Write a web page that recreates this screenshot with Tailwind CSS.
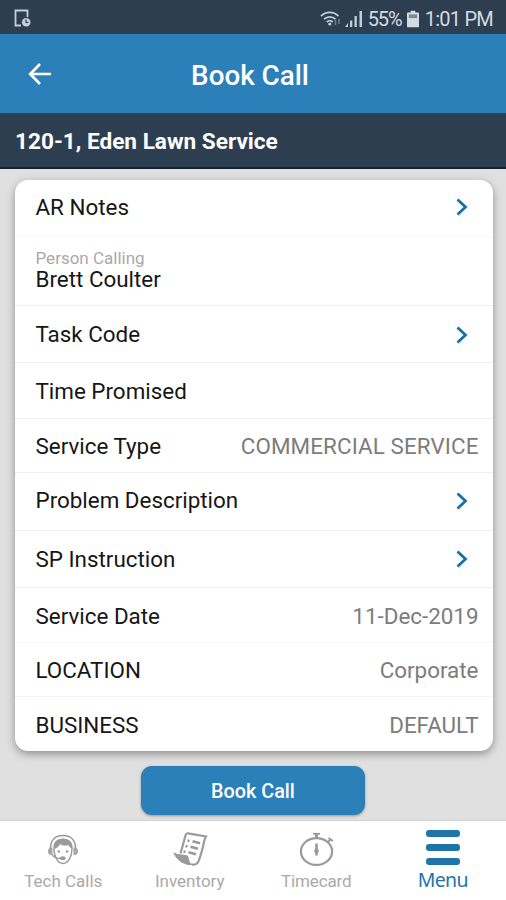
<!DOCTYPE html>
<html lang="en">
  <head>
    <meta charset="UTF-8" />
    <title>Book Call</title>
    <meta name="viewport" content="width=device-width, initial-scale=1.0" />
    <script src="https://cdn.jsdelivr.net/npm/@tailwindcss/browser@4"></script>
    <style>
      body {
        font-family: Roboto, 'Liberation Sans', sans-serif;
      }
    </style>
  </head>
  <body class="bg-[#e0e0e0]">
    <div class="w-[506px] h-[900px] flex flex-col overflow-hidden">

      <!-- Status bar -->
      <div class="h-[34px] shrink-0 bg-[#2d3e50] flex items-center justify-between pl-[14px] pr-[13px] pt-[3px] text-[#d3dbe3]">
        <svg class="w-[18px] h-[19px]" viewBox="0 0 18 19" fill="none" stroke="#c3ced8" stroke-width="1.8">
          <path d="M7 16.5H1.5V1.5h12V8" />
          <circle cx="12.2" cy="13.2" r="4.3" fill="#c3ced8" stroke="none" />
          <path d="M12 10.5v3h2.5" stroke="#2d3e50" stroke-width="1.2" />
        </svg>
        <div class="flex items-center">
          <svg class="w-[22px] h-[18px] mr-[3px]" viewBox="0 0 22 18" fill="none" stroke="#c3ced8" stroke-width="1.8">
            <path d="M1 6.2C6 1.2 13.5 1.2 18.5 6.2" />
            <path d="M4 9.2c3.3-3.2 8.200-3.200 11.500 0" />
            <path d="M6.800 12c1.800-1.600 4.200-1.600 6 0" />
            <circle cx="9.800" cy="14" r="1.600" fill="#c3ced8" stroke="none" />
            <path d="M15.500 10v5M19 9v5" stroke="#6b7b8b" stroke-width="1.600" />
          </svg>
          <svg class="w-[18px] h-[18px] mr-[5px]" viewBox="0 0 18 18" fill="#c3ced8">
            <path d="M0 17l3-4v4zM5 10.500h2.300V17H5zM9.500 6h2.300v11H9.500zM14.500 1H17v16h-2.500z" />
          </svg>
          <span class="text-[20px] leading-none w-[34px] mr-[5px] whitespace-nowrap tracking-[-1.1px]">55%</span>
          <svg class="w-[12px] h-[18px] mr-[6px]" viewBox="0 0 13 18">
            <path d="M4 0h5v2h3a1 1 0 0 1 1 1v14a1 1 0 0 1-1 1H1a1 1 0 0 1-1-1V3a1 1 0 0 1 1-1h3z" fill="#d3dbe3" />
            <path d="M2 4h9v4H2z" fill="#7d8794" />
          </svg>
          <span class="text-[20px] leading-none whitespace-nowrap tracking-[-0.75px]">1:01 PM</span>
        </div>
      </div>

      <!-- Title bar -->
      <header class="h-[79px] shrink-0 bg-[#2c80ba] grid grid-cols-[100px_1fr_106px] items-center">
        <svg class="w-[23px] h-[22px] ml-[28px]" viewBox="0 0 23 22" fill="none" stroke="#fff" stroke-width="2.7">
          <path d="M12 1L2.200 11 12 21M2.200 11H23" />
        </svg>
        <h1 class="text-center text-[27.800px] leading-none font-medium text-white pt-[4px]">Book Call</h1>
      </header>

      <!-- Customer -->
      <div class="h-[56px] shrink-0 bg-[#2d3e50] border-t border-[#1c4a6e] border-b-2 border-b-[#14212e] flex items-center pl-[15px] pt-[3px]">
        <h2 class="text-[22.600px] leading-none font-bold text-white">120-1, Eden Lawn Service</h2>
      </div>

      <main class="h-[652px] shrink-0 border-b border-[#d2d2d2] flex flex-col items-center pt-[11px]">
        <div class="w-[478px] h-[571px] shrink-0 ml-px rounded-[13px] bg-white shadow-[0_3px_8px_rgba(0,0,0,0.36)] text-[22.400px] leading-none text-[#161616] overflow-hidden">
          <div class="h-[57px] border-b border-[#f7f7f7] flex items-center justify-between pl-[21px] pr-[25px] pb-[2px]">
            <span>AR Notes</span>
            <svg class="w-[12px] h-[18px]" viewBox="0 0 12 18" fill="none" stroke="#1870a8" stroke-width="2.800"><path d="M1.500 1.500L9.500 9l-8 7.500" /></svg>
          </div>
          <div class="h-[69px] border-b border-[#efefef] flex flex-col justify-center pl-[21px] pb-[3px]">
            <span class="text-[17px] leading-[20px] text-[#a9a9a9]">Person Calling</span>
            <span class="leading-[23px]">Brett Coulter</span>
          </div>
          <div class="h-[57px] border-b border-[#efefef] flex items-center justify-between pl-[21px] pr-[25px] pt-[1px]">
            <span>Task Code</span>
            <svg class="w-[12px] h-[18px]" viewBox="0 0 12 18" fill="none" stroke="#1870a8" stroke-width="2.800"><path d="M1.500 1.500L9.500 9l-8 7.500" /></svg>
          </div>
          <div class="h-[56px] border-b border-[#efefef] flex items-center pl-[21px] pt-[2px]">
            <span>Time Promised</span>
          </div>
          <div class="h-[54px] border-b border-[#efefef] flex items-center justify-between pl-[21px] pr-[14px] pt-[2px]">
            <span>Service Type</span>
            <span class="text-[#7c7c7c] tracking-[0.1px]">COMMERCIAL SERVICE</span>
          </div>
          <div class="h-[58px] border-b border-[#efefef] flex items-center justify-between pl-[21px] pr-[25px] pb-[2px]">
            <span>Problem Description</span>
            <svg class="w-[12px] h-[18px]" viewBox="0 0 12 18" fill="none" stroke="#1870a8" stroke-width="2.800"><path d="M1.500 1.500L9.500 9l-8 7.500" /></svg>
          </div>
          <div class="h-[57px] border-b border-[#efefef] flex items-center justify-between pl-[21px] pr-[25px]">
            <span>SP Instruction</span>
            <svg class="w-[12px] h-[18px]" viewBox="0 0 12 18" fill="none" stroke="#1870a8" stroke-width="2.800"><path d="M1.500 1.500L9.500 9l-8 7.500" /></svg>
          </div>
          <div class="h-[55px] border-b border-[#f7f7f7] flex items-center justify-between pl-[21px] pr-[14px] pt-[2px]">
            <span>Service Date</span>
            <span class="text-[#7c7c7c]">11-Dec-2019</span>
          </div>
          <div class="h-[54px] border-b border-[#f3f3f3] flex items-center justify-between pl-[21px] pr-[14px] pt-[2px]">
            <span>LOCATION</span>
            <span class="text-[#7c7c7c]">Corporate</span>
          </div>
          <div class="h-[54px] flex items-center justify-between pl-[21px] pr-[14px] pt-[2px]">
            <span>BUSINESS</span>
            <span class="text-[#7c7c7c]">DEFAULT</span>
          </div>
        </div>

        <button class="mt-[15px] w-[224px] h-[49px] shrink-0 rounded-[11px] bg-[#2c80ba] shadow-[0_1px_3px_rgba(0,0,0,0.35)] text-white text-[19.800px] leading-none font-medium pt-[2px]">Book Call</button>
      </main>

      <!-- Tabs -->
      <nav class="grow bg-white grid grid-cols-4 text-[17px] leading-none text-[#a9a9a9]">
        <div class="flex flex-col items-center pt-[13px]">
          <svg class="w-[32px] h-[32px]" viewBox="0 0 32 32" fill="none" stroke="#9a9a9a">
            <path d="M3.500 14C3.500 5.500 9 1.500 16 1.500S28.500 5.500 28.500 14" stroke-width="1.500" />
            <path d="M6.500 15.500C5.500 8 10 4.500 16 4.500s10.500 3.500 9.500 11c-2-1.500-3.500-3-4.500-4.500-3 1.500-6 .5-8-1-1 2.500-3 4-6.500 5.500z" fill="#9a9a9a" stroke="none" />
            <path d="M7 14.500c0 8.500 4 15 9 15s9-6.500 9-15" stroke-width="1.400" />
            <path d="M5.500 13.500C2.500 13 1 14.500 1 17.200s1.500 4.300 4.500 3.800zM26.500 13.500c3-.5 4.500 1 4.500 3.700s-1.500 4.300-4.500 3.800z" fill="#a6a6a6" stroke="none" />
            <path d="M5 20.500c2 3.500 5 4 8.500 4" stroke-width="1.400" />
            <circle cx="11.800" cy="17.500" r="1.300" fill="#9a9a9a" stroke="none" />
            <circle cx="20.200" cy="17.500" r="1.300" fill="#9a9a9a" stroke="none" />
            <path d="M12.500 24.500c1-3 5.500-3 6.500 0-1.500 2-5 2-6.500 0z" fill="#9a9a9a" stroke="none" />
          </svg>
          <span class="mt-[7px]">Tech Calls</span>
        </div>
        <div class="flex flex-col items-center pt-[10px]">
          <svg class="w-[36px] h-[36px]" viewBox="0 0 36 36" fill="none" stroke="#9a9a9a" stroke-width="2.200">
            <path d="M8.500 22.500L13.500 4.500c.5-1.800 1-2.500 2.500-2.200L34 5.500c-2 3-2 5-3 10.500-1.500 5-2.500 9-4 13-1 3-3.500 5.300-7 4.500" />
            <path d="M2 22c4 2.500 9 1.500 13.500 3 1.500 3 .5 6 4.500 8.500-6.500.8-15-3.500-18-11.500z" fill="#9a9a9a" stroke-width="1" />
            <path d="M15.500 9.500l2 .5M20.500 10.200l7.500 2M13.500 15l2 .5M18.500 15.700l7.500 2M11.500 20.500l2 .5M16.500 21.200l7.500 2" stroke-width="2.600" />
          </svg>
          <span class="mt-[6px]">Inventory</span>
        </div>
        <div class="flex flex-col items-center pt-[11px]">
          <svg class="w-[36px] h-[35px] ml-[2px]" viewBox="0 0 36 35" fill="none" stroke="#9a9a9a">
            <ellipse cx="17.500" cy="19.500" rx="15.600" ry="13.400" stroke-width="2.200" />
            <path d="M17.500 2v5" stroke-width="3" />
            <path d="M14 1.800h7" stroke-width="1.800" />
            <path d="M28.500 10.500l3-3M29.500 6l4.500 3" stroke-width="2" />
            <path d="M16.200 11.500h2.600v5c1.500 2 1.200 3.500 0 4.500v2.500h-2.600V21c-1.200-1-1.500-2.500 0-4.500z" fill="#9a9a9a" stroke="none" />
          </svg>
          <span class="mt-[6px] tracking-[-0.1px]">Timecard</span>
        </div>
        <div class="flex flex-col items-center pt-[9px] text-[#1f74aa]">
          <div class="flex flex-col gap-[7px]">
            <div class="w-[34px] h-[7px] rounded-[3px] bg-[#1f74aa]"></div>
            <div class="w-[34px] h-[7px] rounded-[3px] bg-[#1f74aa]"></div>
            <div class="w-[34px] h-[7px] rounded-[3px] bg-[#1f74aa]"></div>
          </div>
          <span class="mt-[5px] text-[19.500px] tracking-[-0.7px] font-['Noto_Sans',sans-serif]">Menu</span>
        </div>
      </nav>
    </div>
  </body>
</html>
